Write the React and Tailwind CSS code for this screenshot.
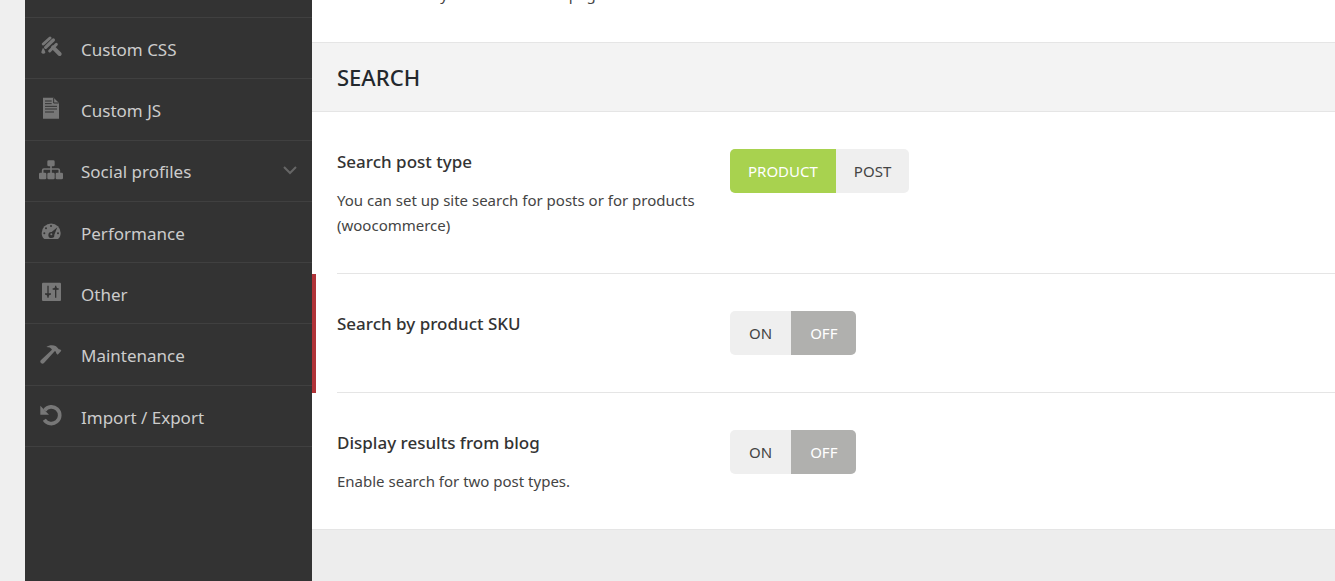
import { useState } from 'react'

function BrushIcon() {
  return (
    <svg className="w-6 h-6" viewBox="0 0 72 72" fill="none" stroke="currentColor" strokeLinecap="round">
      <path d="M13 24 33 6" strokeWidth="9" />
      <path d="M20 34 43 12" strokeWidth="10" />
      <path d="M32 45 52 25" strokeWidth="9" />
      <path d="M42 34 62 54" strokeWidth="12" />
      <path d="M12 35c5 7 7 11 7 15a7 7 0 0 1-12 0c0-4 2-9 5-15Z" fill="currentColor" stroke="none" />
    </svg>
  )
}

function FileIcon() {
  return (
    <svg className="w-6 h-6" viewBox="0 0 72 72" fill="currentColor">
      <path d="M12 2h32l16 16v47H12Z" />
      <path d="M44 3v15h15M18 12h20M18 20h20M18 28h36M18 36h36M18 45h27" fill="none" stroke="#333" strokeWidth="3" />
    </svg>
  )
}

function SitemapIcon() {
  return (
    <svg className="w-6 h-6" viewBox="0 0 72 72" fill="currentColor">
      <rect x="25" y="4" width="22" height="18" rx="4" />
      <rect x="0" y="41" width="22" height="20" rx="4" />
      <rect x="25" y="41" width="22" height="20" rx="4" />
      <rect x="50" y="41" width="22" height="20" rx="4" />
      <path d="M36 20v22M11 42V34q0-4 4-4h42q4 0 4 4v8" fill="none" stroke="currentColor" strokeWidth="5" />
    </svg>
  )
}

function GaugeIcon() {
  return (
    <svg className="w-6 h-6" viewBox="0 0 72 72" fill="currentColor">
      <path d="M16 57C10 52 8 46 8 39a28.500 28.500 0 0 1 57 0c0 7-2 13-8 18Z" />
      <g fill="#333">
        <circle cx="36" cy="18" r="3" />
        <circle cx="21" cy="25" r="3" />
        <circle cx="16" cy="40" r="3" />
        <circle cx="57" cy="40" r="3" />
        <path d="m55 22-9 22a9 9 0 1 1-8-8Z" />
      </g>
      <circle cx="37" cy="43" r="3" />
    </svg>
  )
}

function SlidersIcon() {
  return (
    <svg className="w-6 h-6" viewBox="0 0 72 72" fill="none">
      <rect x="9" y="5" width="57" height="55" rx="3" fill="currentColor" />
      <path d="M27 14v36M18 39h18M50 14v36M41 24h18" stroke="#333" strokeWidth="4" />
      <path d="m20 39 7 9 7-9ZM43 25l7-9 7 9Z" fill="#333" />
    </svg>
  )
}

function HammerIcon() {
  return (
    <svg className="w-6 h-6" viewBox="0 0 72 72" fill="currentColor">
      <path d="M22 12C31 5 43 5 51 10l6 6c1 3 3 4 6 3l4 4-11 12-5-5c1-3-1-5-4-5L15 60c-3 3-6 3-9 0s-3-6 0-9L39 20c-3-6-9-8-17-8Z" />
    </svg>
  )
}

function UndoIcon() {
  return (
    <svg className="w-6 h-6" viewBox="0 0 72 72" fill="none">
      <path d="M17 19A25 25 0 1 1 16 47" stroke="currentColor" strokeWidth="11" />
      <path d="M4 5v27h26Z" fill="currentColor" />
    </svg>
  )
}

const menu = [
  { label: 'Custom CSS', icon: <BrushIcon /> },
  { label: 'Custom JS', icon: <FileIcon /> },
  { label: 'Social profiles', icon: <SitemapIcon />, children: true },
  { label: 'Performance', icon: <GaugeIcon /> },
  { label: 'Other', icon: <SlidersIcon /> },
  { label: 'Maintenance', icon: <HammerIcon /> },
  { label: 'Import / Export', icon: <UndoIcon /> },
]

const fields = [
  {
    id: 'post_type',
    type: 'buttons',
    title: 'Search post type',
    desc: 'You can set up site search for posts or for products (woocommerce)',
    options: ['PRODUCT', 'POST'],
    value: 'PRODUCT',
  },
  { id: 'sku', type: 'switcher', title: 'Search by product SKU', options: ['ON', 'OFF'], value: 'OFF', marked: true },
  {
    id: 'blog',
    type: 'switcher',
    title: 'Display results from blog',
    desc: 'Enable search for two post types.',
    options: ['ON', 'OFF'],
    value: 'OFF',
  },
]

function Switcher({ id, type, options, value, onChange }) {
  const padding = type === 'switcher' ? 'px-[19px]' : 'px-[18px]'

  return (
    <div role="group" aria-labelledby={id} className="flex h-11 rounded-[5px] overflow-hidden bg-[#efefef]">
      {options.map((option) => {
        let color = 'text-[#444]'
        if (option === value) color = option === 'OFF' ? 'bg-[#b0b0ae] text-white' : 'bg-[#a8d24f] text-white'
        return (
          <button
            key={option}
            type="button"
            aria-pressed={option === value}
            onClick={() => onChange(option)}
            className={`text-[15px] ${padding} ${color}`}
          >
            {option}
          </button>
        )
      })}
    </div>
  )
}

function Field({ field, last }) {
  const [value, setValue] = useState(field.value)

  return (
    <div className={field.marked ? 'border-l-4 border-[#b03338] pl-[21px]' : 'pl-[25px]'}>
      <div className={`flex items-start pt-[37px] pb-[35px] ${last ? '' : 'min-h-[119px] border-b border-[#e5e5e5]'}`}>
        <div className="w-[393px] shrink-0 pr-6">
          <h3 id={field.id} className="text-[17px] leading-[25px] font-medium text-[#333]">{field.title}</h3>
          {field.desc && <p className="mt-[14px] text-[15px] leading-[25px] text-[#444]">{field.desc}</p>}
        </div>
        <Switcher id={field.id} type={field.type} options={field.options} value={value} onChange={setValue} />
      </div>
    </div>
  )
}

export default function App() {
  return (
    <div className="flex h-screen overflow-hidden bg-[#efefef] pl-[25px] font-['Noto_Sans','Open_Sans',sans-serif]">
      {/* Sidebar */}
      <nav className="w-[287px] shrink-0 bg-[#333] pt-[17px]">
        <ul className="grid auto-rows-fr h-[430px] border-t border-[#404040]">
          {menu.map((item) => (
            <li key={item.label} className="border-b border-[#404040]">
              <a href="#" className="flex items-center h-full pl-[14px] pr-[15px] text-[17px] text-[#ccc]">
                <span className="w-6 flex justify-center text-[#777]">{item.icon}</span>
                <span className="ml-[18px] pt-[3px] flex-1">{item.label}</span>
                {item.children && (
                  <svg className="w-[14px] h-[9px] text-[#666]" viewBox="0 0 14 9" fill="none" stroke="currentColor" strokeWidth="2">
                    <path d="m1 1 6 6 6-6" />
                  </svg>
                )}
              </a>
            </li>
          ))}
        </ul>
      </nav>

      {/* Options */}
      <main className="flex-1 min-w-0 bg-[#ededed]">
        <div className="-mt-[18px] bg-white pl-[25px] pb-[35px]">
          <p className="text-[15px] leading-[25px] text-[#444]">and shown only on the checkout page.</p>
        </div>
        <section className="bg-white border-b border-[#e5e5e5]">
          <h2 className="border-y border-[#e5e5e5] bg-[#f3f3f3] py-[19px] pl-[25px] text-[22px] leading-[30px] font-medium text-[#23282d]">
            SEARCH
          </h2>
          {fields.map((field, i) => (
            <Field key={field.id} field={field} last={i === fields.length - 1} />
          ))}
        </section>
      </main>
    </div>
  )
}
